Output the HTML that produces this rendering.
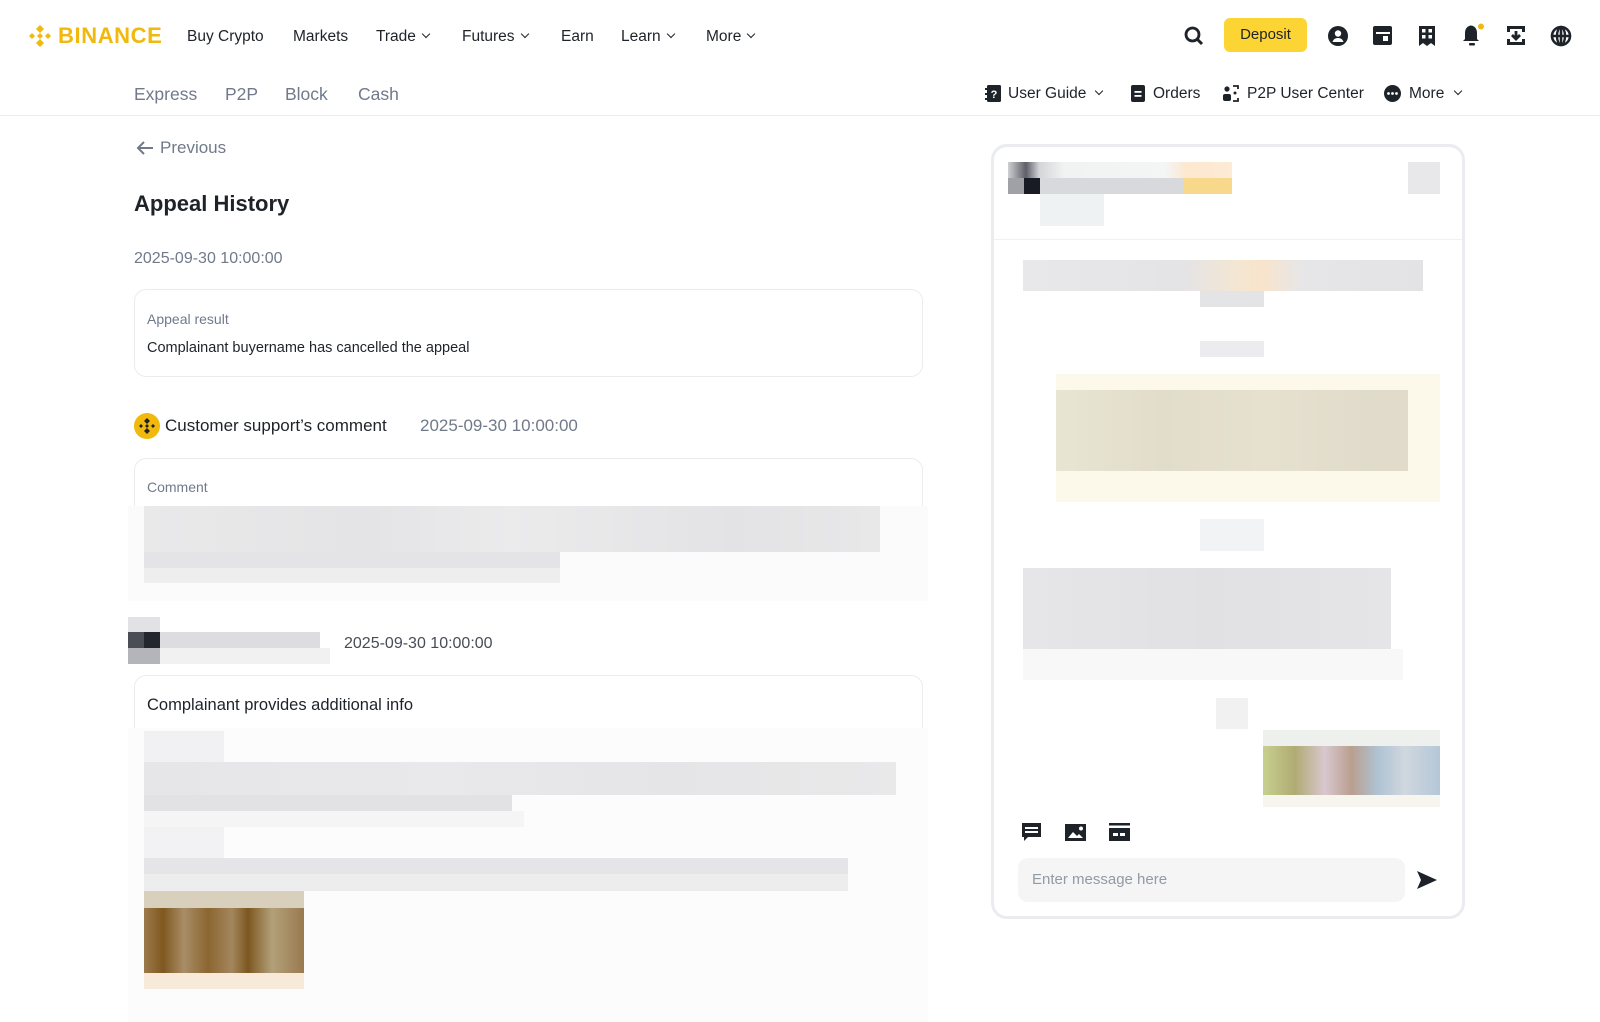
<!DOCTYPE html>
<html><head><meta charset="utf-8">
<style>
*{margin:0;padding:0;box-sizing:border-box}
body{width:1600px;height:1022px;background:#fff;font-family:"Liberation Sans",sans-serif;color:#1e2329;position:relative;overflow:hidden}
.a{position:absolute;white-space:nowrap}
.nav{font-size:15.5px;color:#1e2329;top:28px}
.sub{font-size:17.5px;color:#707a8a;top:84px}
.rs{font-size:15.5px;color:#1e2329;top:85px}
.ic{position:absolute}
.b{position:absolute}
.chev{display:inline-block;width:6px;height:6px;border-right:1.6px solid #1e2329;border-bottom:1.6px solid #1e2329;transform:rotate(45deg);margin-left:7px;position:relative;top:-4px}
.card{position:absolute;border:1px solid #eaecef;border-radius:12px;background:#fff}
</style></head><body>

<svg class="ic" style="left:27px;top:23px" width="26" height="26" viewBox="0 0 26 26"><g fill="#f0b90b"><path d="M13 2l4 4-4 4-4-4z"/><path d="M13 16l4 4-4 4-4-4z"/><path d="M2 13l3-3 3 3-3 3z"/><path d="M18 13l3-3 3 3-3 3z"/><path d="M13 10l3 3-3 3-3-3z"/></g></svg>
<div class="a" style="left:58px;top:23px;font-size:22px;font-weight:bold;color:#f0b90b;letter-spacing:0.6px">BINANCE</div>

<div class="a nav" style="left:187px">Buy Crypto</div>
<div class="a nav" style="left:293px">Markets</div>
<div class="a nav" style="left:376px">Trade<span class="chev"></span></div>
<div class="a nav" style="left:462px">Futures<span class="chev"></span></div>
<div class="a nav" style="left:561px">Earn</div>
<div class="a nav" style="left:621px">Learn<span class="chev"></span></div>
<div class="a nav" style="left:706px">More<span class="chev"></span></div>

<svg class="ic" style="left:1183px;top:25px" width="22" height="22" viewBox="0 0 22 22"><circle cx="9.5" cy="9.5" r="6.5" fill="none" stroke="#1e2329" stroke-width="2.8"/><path d="M14 14l5 5" stroke="#1e2329" stroke-width="3"/></svg>
<div class="b" style="left:1224px;top:18px;width:83px;height:34px;background:#fcd535;border-radius:6px;font-size:15px;text-align:center;line-height:34px;color:#1e2329">Deposit</div>
<svg class="ic" style="left:1327px;top:25px" width="22" height="22" viewBox="0 0 22 22"><circle cx="11" cy="11" r="10" fill="#1e2329"/><circle cx="11" cy="8.5" r="3.2" fill="#fff"/><path d="M5.5 17c1-3 3-4 5.5-4s4.5 1 5.5 4z" fill="#fff"/></svg>
<svg class="ic" style="left:1372px;top:25px" width="21" height="21" viewBox="0 0 21 21"><rect x="1" y="1" width="19" height="19" rx="2" fill="#1e2329"/><rect x="4" y="7" width="14" height="2" fill="#fff"/><rect x="11" y="11" width="5" height="5" fill="#fff"/></svg>
<svg class="ic" style="left:1418px;top:25px" width="18" height="22" viewBox="0 0 18 22"><path d="M1 1h16v20l-4-3-4 3-4-3-4 3z" fill="#1e2329"/><g fill="#fff"><rect x="4" y="4" width="3.5" height="3.5"/><rect x="10.5" y="4" width="3.5" height="3.5"/><rect x="4" y="10" width="3.5" height="3.5"/><rect x="10.5" y="10" width="3.5" height="3.5"/></g></svg>
<svg class="ic" style="left:1461px;top:23px" width="24" height="24" viewBox="0 0 24 24"><path d="M10 2.5c-4 .5-6 3.5-6 7.5v6l-2 2h16l-2-2v-6c0-4-2-7-6-7.5z" fill="#1e2329"/><rect x="8" y="20" width="6" height="2.5" rx="1" fill="#1e2329"/><circle cx="20" cy="3.5" r="3" fill="#f0b90b"/></svg>
<svg class="ic" style="left:1506px;top:25px" width="20" height="21" viewBox="0 0 20 21"><path d="M1 1h18v6h-3V4H4v3H1zM1 14h3v3h12v-3h3v6H1z" fill="#1e2329"/><path d="M10 6v7M6 10l4 4 4-4" stroke="#1e2329" stroke-width="2.8" fill="none"/></svg>
<svg class="ic" style="left:1550px;top:25px" width="22" height="22" viewBox="0 0 22 22"><circle cx="11" cy="11" r="9" fill="none" stroke="#1e2329" stroke-width="2.6"/><path d="M11 2v18M2 11h18" stroke="#1e2329" stroke-width="2.6"/><ellipse cx="11" cy="11" rx="4" ry="9" fill="none" stroke="#1e2329" stroke-width="2.4"/></svg>

<div class="a sub" style="left:134px">Express</div>
<div class="a sub" style="left:225px">P2P</div>
<div class="a sub" style="left:285px">Block</div>
<div class="a sub" style="left:358px">Cash</div>

<svg class="ic" style="left:985px;top:85px" width="16" height="17" viewBox="0 0 16 17"><rect x="2" y="0" width="14" height="17" rx="1.5" fill="#1e2329"/><rect x="0" y="3" width="3" height="2" fill="#1e2329"/><rect x="0" y="8" width="3" height="2" fill="#1e2329"/><rect x="0" y="13" width="3" height="2" fill="#1e2329"/><text x="9" y="13" font-size="11" font-weight="bold" fill="#fff" text-anchor="middle" font-family="Liberation Sans">?</text></svg>
<div class="a rs" style="left:1008px">User Guide<span class="chev" style="margin-left:10px"></span></div>
<svg class="ic" style="left:1131px;top:85px" width="14" height="17" viewBox="0 0 14 17"><rect width="14" height="17" rx="2" fill="#1e2329"/><rect x="3.5" y="6" width="7" height="1.8" fill="#fff"/><rect x="3.5" y="10" width="7" height="1.8" fill="#fff"/></svg>
<div class="a rs" style="left:1153px">Orders</div>
<svg class="ic" style="left:1222px;top:85px" width="17" height="17" viewBox="0 0 17 17"><circle cx="5" cy="4" r="2.6" fill="#1e2329"/><rect x="1" y="9" width="8" height="7" rx="2" fill="#1e2329"/><path d="M11 1h5v3M11 16h5v-3" stroke="#1e2329" stroke-width="1.8" fill="none"/><circle cx="13" cy="8" r="1.5" fill="#1e2329"/></svg>
<div class="a rs" style="left:1247px">P2P User Center</div>
<svg class="ic" style="left:1384px;top:85px" width="17" height="17" viewBox="0 0 17 17"><circle cx="8.5" cy="8.5" r="8.5" fill="#1e2329"/><circle cx="4.5" cy="8.5" r="1.4" fill="#fff"/><circle cx="8.5" cy="8.5" r="1.4" fill="#fff"/><circle cx="12.5" cy="8.5" r="1.4" fill="#fff"/></svg>
<div class="a rs" style="left:1409px">More<span class="chev" style="margin-left:11px"></span></div>

<div class="b" style="left:0;top:115px;width:1600px;height:1px;background:#eaecef"></div>

<svg class="ic" style="left:136px;top:140px" width="18" height="16" viewBox="0 0 18 16"><path d="M17 8H3M8 2L2 8l6 6" stroke="#707a8a" stroke-width="2" fill="none"/></svg>
<div class="a" style="left:160px;top:138px;font-size:17px;color:#707a8a">Previous</div>
<div class="a" style="left:134px;top:191px;font-size:22px;font-weight:bold;color:#1e2329">Appeal History</div>
<div class="a" style="left:134px;top:250px;font-size:16px;color:#707a8a">2025-09-30 10:00:00</div>

<div class="card" style="left:134px;top:289px;width:789px;height:88px"></div>
<div class="a" style="left:147px;top:311px;font-size:14px;color:#707a8a">Appeal result</div>
<div class="a" style="left:147px;top:340px;font-size:14.5px;color:#1e2329">Complainant buyername has cancelled the appeal</div>

<svg class="ic" style="left:134px;top:413px" width="26" height="26" viewBox="0 0 26 26"><circle cx="13" cy="13" r="13" fill="#f0b90b"/><g fill="#1e2329"><path d="M13 5l3 3-3 3-3-3z"/><path d="M13 15l3 3-3 3-3-3z"/><path d="M5 13l2-2 2 2-2 2z"/><path d="M17 13l2-2 2 2-2 2z"/><path d="M13 11l2 2-2 2-2-2z"/></g></svg>
<div class="a" style="left:165px;top:416px;font-size:17px;color:#1e2329">Customer support’s comment</div>
<div class="a" style="left:420px;top:416px;font-size:17px;color:#707a8a">2025-09-30 10:00:00</div>

<div class="card" style="left:134px;top:458px;width:789px;height:120px;border-bottom:none;border-radius:12px 12px 0 0"></div>
<div class="a" style="left:147px;top:479px;font-size:14px;color:#707a8a">Comment</div>
<div class="b" style="left:128px;top:506px;width:800px;height:95px;background:#fbfbfb"></div>
<div class="b" style="left:144px;top:506px;width:736px;height:46px;background:linear-gradient(90deg,#e9e9ea,#e4e4e6 30%,#ebebec 50%,#e3e3e5 80%,#e8e8e9)"></div>
<div class="b" style="left:144px;top:552px;width:416px;height:16px;background:#e4e4e6"></div>
<div class="b" style="left:144px;top:568px;width:416px;height:15px;background:#eeeeef"></div>

<div class="b" style="left:128px;top:617px;width:32px;height:15px;background:#e2e2e4"></div>
<div class="b" style="left:128px;top:632px;width:16px;height:16px;background:#4a4d55"></div>
<div class="b" style="left:144px;top:632px;width:16px;height:16px;background:#23262e"></div>
<div class="b" style="left:128px;top:648px;width:32px;height:16px;background:#b4b5bb"></div>
<div class="b" style="left:160px;top:632px;width:160px;height:16px;background:#dddde0"></div>
<div class="b" style="left:160px;top:648px;width:170px;height:16px;background:#f1f1f2"></div>
<div class="a" style="left:344px;top:635px;font-size:16px;color:#474d57">2025-09-30 10:00:00</div>

<div class="card" style="left:134px;top:675px;width:789px;height:347px;border-bottom:none"></div>
<div class="a" style="left:147px;top:696px;font-size:16.5px;color:#1e2329">Complainant provides additional info</div>
<div class="b" style="left:128px;top:728px;width:800px;height:294px;background:#fcfcfc"></div>
<div class="b" style="left:144px;top:731px;width:80px;height:31px;background:#f1f1f3"></div>
<div class="b" style="left:144px;top:762px;width:752px;height:33px;background:linear-gradient(90deg,#e6e6e8,#e9e9eb 40%,#e5e5e7 70%,#e9e9ea)"></div>
<div class="b" style="left:144px;top:795px;width:368px;height:16px;background:#e2e2e4"></div>
<div class="b" style="left:144px;top:811px;width:380px;height:16px;background:#f5f5f6"></div>
<div class="b" style="left:144px;top:827px;width:80px;height:31px;background:#f2f2f4"></div>
<div class="b" style="left:144px;top:858px;width:704px;height:16px;background:#e5e5e7"></div>
<div class="b" style="left:144px;top:874px;width:704px;height:17px;background:#ededee"></div>
<div class="b" style="left:144px;top:891px;width:160px;height:17px;background:#d9cfbd"></div>
<div class="b" style="left:144px;top:908px;width:160px;height:65px;background:linear-gradient(90deg,#9c7a4c,#80581f 12%,#a88d67 25%,#8b6630 40%,#a3865e 55%,#7d571f 65%,#b2a07a 80%,#9a7a4e)"></div>
<div class="b" style="left:144px;top:973px;width:160px;height:16px;background:#f7ead8"></div>

<!-- chat panel -->
<div class="b" style="left:991px;top:144px;width:474px;height:775px;border:3px solid #eaecef;border-radius:16px;background:#fff"></div>
<div class="b" style="left:1008px;top:162px;width:224px;height:16px;background:linear-gradient(90deg,#cfd0d3,#5d6068 8%,#d4d5d8 14%,#f1f2f2 25%,#f4f5f5 70%,#fde7cf 80%,#fdebd6)"></div>
<div class="b" style="left:1008px;top:178px;width:224px;height:16px;background:#d8d9dc"></div>
<div class="b" style="left:1008px;top:178px;width:16px;height:16px;background:#9fa1a7"></div>
<div class="b" style="left:1024px;top:178px;width:16px;height:16px;background:#181b24"></div>
<div class="b" style="left:1184px;top:178px;width:48px;height:16px;background:#f8d88a"></div>
<div class="b" style="left:1040px;top:194px;width:64px;height:32px;background:#eef2f2"></div>
<div class="b" style="left:1408px;top:162px;width:32px;height:32px;background:#e8e8ea"></div>
<div class="b" style="left:994px;top:239px;width:468px;height:1px;background:#f0f1f2"></div>
<div class="b" style="left:1023px;top:260px;width:400px;height:31px;background:linear-gradient(90deg,#e8e8ea,#e4e4e6 40%,#f5e6d0 55%,#f8e4cc 60%,#e6e6e8 70%,#e3e3e5)"></div>
<div class="b" style="left:1200px;top:291px;width:64px;height:16px;background:#e4e4e6"></div>
<div class="b" style="left:1200px;top:341px;width:64px;height:16px;background:#ececee"></div>
<div class="b" style="left:1056px;top:374px;width:384px;height:128px;background:#fcf9ea"></div>
<div class="b" style="left:1056px;top:390px;width:352px;height:81px;background:linear-gradient(90deg,#e9e5d3,#e2ddcb 30%,#e6e1cf 60%,#e0dbca 90%)"></div>
<div class="b" style="left:1200px;top:519px;width:64px;height:32px;background:#f2f3f4"></div>
<div class="b" style="left:1023px;top:568px;width:368px;height:81px;background:linear-gradient(90deg,#e6e6e8,#e1e1e3 50%,#e5e5e7)"></div>
<div class="b" style="left:1023px;top:649px;width:380px;height:31px;background:#f8f8f9"></div>
<div class="b" style="left:1216px;top:698px;width:32px;height:31px;background:#f1f1f2"></div>
<div class="b" style="left:1263px;top:730px;width:177px;height:16px;background:#eef0ee"></div>
<div class="b" style="left:1263px;top:746px;width:177px;height:49px;background:linear-gradient(90deg,#c7d08f,#b0ab73 18%,#d9c7cf 35%,#b99f8e 50%,#afc3d4 65%,#d0d7de 80%,#b4c7d8)"></div>
<div class="b" style="left:1263px;top:795px;width:177px;height:12px;background:#f6f6ef"></div>

<svg class="ic" style="left:1021px;top:822px" width="21" height="21" viewBox="0 0 21 21"><path d="M1 1h19v14H7l-4 4v-4H1z" fill="#1e2329"/><rect x="4" y="5" width="13" height="2" fill="#fff"/><rect x="4" y="9" width="13" height="2" fill="#fff"/></svg>
<svg class="ic" style="left:1065px;top:824px" width="21" height="17" viewBox="0 0 21 17"><rect width="21" height="17" fill="#1e2329"/><path d="M3 14l5-6 4 4 2-2 4 4z" fill="#fff"/><circle cx="16" cy="4.5" r="2" fill="#fff"/></svg>
<svg class="ic" style="left:1109px;top:823px" width="21" height="18" viewBox="0 0 21 18"><rect y="0" width="21" height="2.5" fill="#1e2329"/><rect y="5" width="21" height="13" fill="#1e2329"/><rect x="4" y="10" width="5" height="3" fill="#fff"/><rect x="11" y="10" width="5" height="3" fill="#fff"/></svg>

<div class="b" style="left:1018px;top:858px;width:387px;height:44px;background:#f5f5f5;border-radius:10px"></div>
<div class="a" style="left:1032px;top:871px;font-size:15px;color:#929aa5">Enter message here</div>
<svg class="ic" style="left:1416px;top:870px" width="22" height="20" viewBox="0 0 22 20"><path d="M1 1l20 9-20 9 4-9z" fill="#1e2329"/></svg>
</body></html>
